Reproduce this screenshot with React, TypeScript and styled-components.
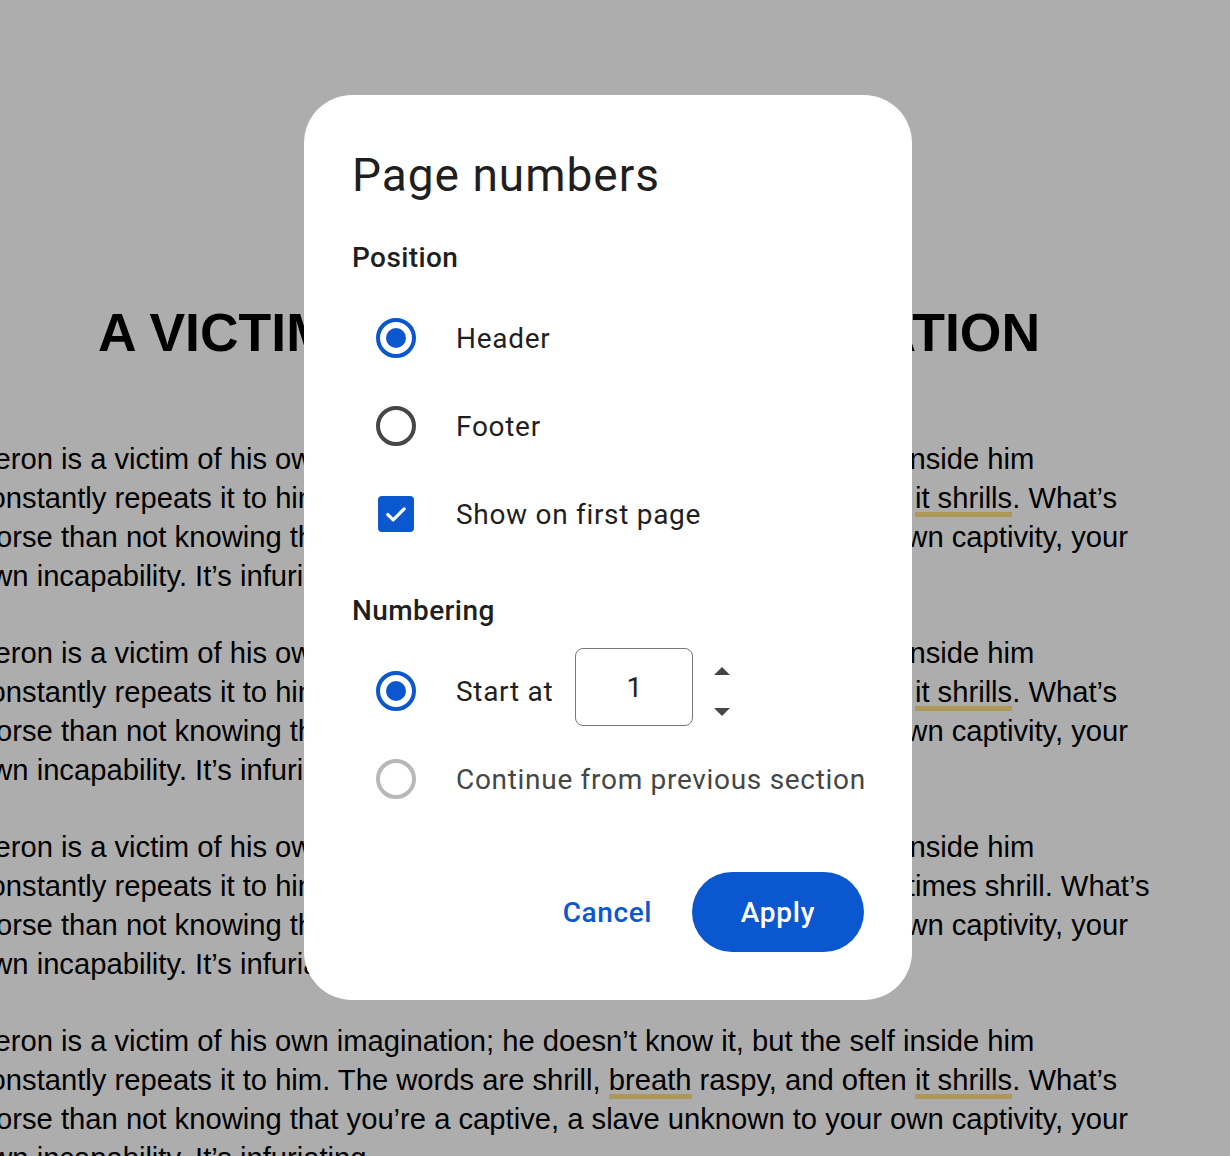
import React, { useState } from "react";
import styled, { createGlobalStyle } from "styled-components";

const GlobalStyle = createGlobalStyle`
  html, body {
    margin: 0;
    padding: 0;
    background: #ffffff;
    overflow: hidden;
  }
`;

const Viewport = styled.div`
  position: relative;
  width: 1230px;
  height: 1156px;
  overflow: hidden;
  background: #ffffff;
`;

const Page = styled.div`
  width: 1188px;
  margin-left: -25px;
  padding-top: 301px;
  font-family: "Liberation Sans", Arial, sans-serif;
  color: #000;
`;

const DocTitle = styled.h1`
  margin: 0 0 75px;
  font-size: 53.5px;
  line-height: 1.2;
  font-weight: 700;
  text-align: center;
  white-space: nowrap;
`;

const Paragraph = styled.p`
  margin: 0 0 38.8px;
  font-size: 29.2px;
  line-height: 38.8px;
`;

const Line = styled.span`
  display: block;
  white-space: nowrap;
`;

/* grammar suggestion marker under a word */
const Flagged = styled.span`
  padding-bottom: 3px;
  background: linear-gradient(#ffe082, #ffe082) left bottom / 100% 5px
    no-repeat;
`;

const Scrim = styled.div`
  position: absolute;
  inset: 0;
  background: rgba(0, 0, 0, 0.32);
  display: flex;
  align-items: flex-start;
  padding: 95px 0 0 304px;
`;

const Dialog = styled.div`
  width: 608px;
  box-sizing: border-box;
  padding: 52px 48px 48px;
  background: #fff;
  border-radius: 48px;
  font-family: Roboto, "Noto Sans", sans-serif;
  color: #1f1f1f;
`;

const Heading = styled.h2`
  margin: 0 0 37px;
  font-size: 46px;
  line-height: 56px;
  font-weight: 400;
  letter-spacing: 1px;
`;

const SectionLabel = styled.div<{ $gap: number }>`
  margin-top: ${(p) => p.$gap}px;
  margin-bottom: 18px;
  font-size: 28px;
  line-height: 36px;
  font-weight: 500;
  letter-spacing: 0.4px;
`;

const Option = styled.label`
  display: flex;
  align-items: center;
  height: 88px;
  gap: 40px;
  padding-left: 24px;
  cursor: pointer;
`;

const OptionText = styled.span<{ $muted?: boolean }>`
  font-size: 28px;
  letter-spacing: 0.7px;
  white-space: nowrap;
  color: ${(p) => (p.$muted ? "#444746" : "#1f1f1f")};
`;

const RadioRing = styled.span<{ $on: boolean; $disabled?: boolean }>`
  box-sizing: border-box;
  width: 40px;
  height: 40px;
  flex: none;
  border-radius: 50%;
  border: 4px solid
    ${(p) => (p.$on ? "#0b57d0" : p.$disabled ? "#b8b8b8" : "#444746")};
  display: flex;
  align-items: center;
  justify-content: center;

  &::after {
    content: "";
    width: 20px;
    height: 20px;
    border-radius: 50%;
    background: #0b57d0;
    display: ${(p) => (p.$on ? "block" : "none")};
  }
`;

const CheckBox = styled.span<{ $on: boolean }>`
  box-sizing: border-box;
  width: 36px;
  height: 36px;
  margin: 0 2px;
  flex: none;
  border-radius: 4px;
  background: ${(p) => (p.$on ? "#0b57d0" : "transparent")};
  border: ${(p) => (p.$on ? "none" : "4px solid #444746")};
  display: flex;
  align-items: center;
  justify-content: center;
`;

const StartRow = styled.div`
  display: flex;
  align-items: center;
  gap: 22px;
`;

const NumberBox = styled.div`
  box-sizing: border-box;
  width: 118px;
  height: 78px;
  margin-top: -8px;
  border: 1.5px solid #79797c;
  border-radius: 8px;
  display: flex;
  align-items: center;
  justify-content: center;
  font-size: 28px;
  color: #1f1f1f;
`;

const Spinner = styled.div`
  display: flex;
  flex-direction: column;
  gap: 33px;
  margin-left: -1px;
`;

const Actions = styled.div`
  display: flex;
  justify-content: flex-end;
  align-items: center;
  gap: 16px;
  margin-top: 49px;
`;

const TextButton = styled.button`
  border: none;
  background: none;
  padding: 0 24px;
  height: 80px;
  font-family: Roboto, "Noto Sans", sans-serif;
  font-size: 28px;
  font-weight: 500;
  letter-spacing: 0.6px;
  color: #0b57d0;
  cursor: pointer;
`;

const FilledButton = styled.button`
  border: none;
  width: 172px;
  height: 80px;
  border-radius: 40px;
  background: #0b57d0;
  font-family: Roboto, "Noto Sans", sans-serif;
  font-size: 28px;
  font-weight: 500;
  letter-spacing: 0.8px;
  color: #fff;
  cursor: pointer;
`;

const Arrow = ({ up }: { up?: boolean }) => (
  <svg width="16" height="8" viewBox="0 0 16 8">
    <path d={up ? "M0 8 L8 0 L16 8 Z" : "M0 0 L16 0 L8 8 Z"} fill="#444746" />
  </svg>
);

const Check = () => (
  <svg width="28" height="28" viewBox="0 0 24 24">
    <path
      d="M5 12.5 L9.6 17 L19 7.6"
      fill="none"
      stroke="#fff"
      strokeWidth="2.8"
      strokeLinecap="round"
      strokeLinejoin="round"
    />
  </svg>
);

const shrills = (
  <>
    and often <Flagged>it shrills</Flagged>. What’s
  </>
);

// second line ending for each paragraph
const tails: React.ReactNode[] = [
  shrills,
  shrills,
  <>and oftentimes shrill. What’s</>,
  shrills,
];

const PageNumbersDialog: React.FC = () => {
  const [position, setPosition] = useState<"header" | "footer">("header");
  const [firstPage, setFirstPage] = useState(true);
  const [numbering, setNumbering] = useState<"start" | "continue">("start");

  return (
    <Dialog role="dialog">
      <Heading>Page numbers</Heading>
      <SectionLabel $gap={0}>Position</SectionLabel>
      <Option onClick={() => setPosition("header")}>
        <RadioRing $on={position === "header"} />
        <OptionText>Header</OptionText>
      </Option>
      <Option onClick={() => setPosition("footer")}>
        <RadioRing $on={position === "footer"} />
        <OptionText>Footer</OptionText>
      </Option>
      <Option onClick={() => setFirstPage((v) => !v)}>
        <CheckBox $on={firstPage}>{firstPage && <Check />}</CheckBox>
        <OptionText>Show on first page</OptionText>
      </Option>

      <SectionLabel $gap={35}>Numbering</SectionLabel>
      <Option onClick={() => setNumbering("start")}>
        <RadioRing $on={numbering === "start"} />
        <StartRow>
          <OptionText>Start at</OptionText>
          <NumberBox>1</NumberBox>
          <Spinner>
            <Arrow up />
            <Arrow />
          </Spinner>
        </StartRow>
      </Option>
      <Option>
        <RadioRing $on={numbering === "continue"} $disabled />
        <OptionText $muted>Continue from previous section</OptionText>
      </Option>

      <Actions>
        <TextButton>Cancel</TextButton>
        <FilledButton>Apply</FilledButton>
      </Actions>
    </Dialog>
  );
};

export default function App() {
  return (
    <Viewport>
      <GlobalStyle />
      <Page>
        <DocTitle>A VICTIM OF HIS OWN IMAGINATION</DocTitle>
        {tails.map((tail, i) => (
          <Paragraph key={i}>
            <Line>
              Aeron is a victim of his own imagination; he doesn’t know it, but
              the self inside him
            </Line>
            <Line>
              constantly repeats it to him. The words are shrill,{" "}
              <Flagged>breath</Flagged> raspy, {tail}
            </Line>
            <Line>
              worse than not knowing that you’re a captive, a slave unknown to
              your own captivity, your
            </Line>
            <Line>own incapability. It’s infuriating.</Line>
          </Paragraph>
        ))}
      </Page>
      <Scrim>
        <PageNumbersDialog />
      </Scrim>
    </Viewport>
  );
}
